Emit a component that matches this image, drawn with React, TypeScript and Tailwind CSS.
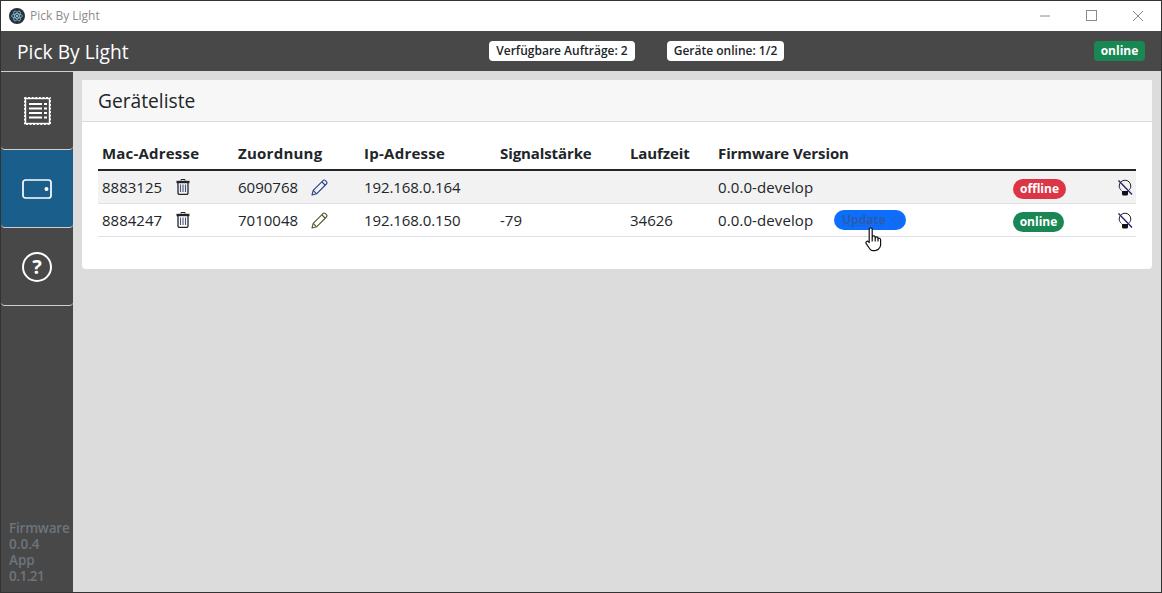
import React from "react";

const Trash = () => (
  <svg width="14" height="16" viewBox="0 0 14 16" fill="none" stroke="#212529">
    <path d="M0.5 3h13" strokeWidth="2.4" />
    <path d="M5 1.5v-1h4v1" strokeWidth="1" />
    <path d="M2 4v10a1.5 1.5 0 0 0 1.5 1.5h7A1.5 1.5 0 0 0 12 14V4" strokeWidth="1.3" />
    <path d="M4.5 5.5v7.5M7 5.5v7.5M9.5 5.5v7.5" strokeWidth="1.1" stroke="#4a5578" />
  </svg>
);

const Pencil = ({ color }: { color: string }) => (
  <svg width="17" height="17" viewBox="0 0 17 17" fill="none" stroke={color} strokeWidth="1.1" strokeLinejoin="round">
    <path d="M1 16l1.2-4.6L12 1.6a1.7 1.7 0 0 1 2.4 0l1 1a1.7 1.7 0 0 1 0 2.4L5.6 14.8z" />
    <path d="M2.2 11.4l3.4 3.4M11 3l3 3" />
  </svg>
);

const Bulb = () => (
  <svg width="16" height="17" viewBox="0 0 16 17" fill="none">
    <path d="M4.5 11.5C3 10.3 2.2 8.8 2.2 7a5.8 5.8 0 0 1 11.6 0c0 1.8-.8 3.3-2.3 4.5" stroke="#222" strokeWidth="1" />
    <path d="M5 12h6v3a1.5 1.5 0 0 1-1.5 1.5h-3A1.5 1.5 0 0 1 5 15z" fill="#111" />
    <path d="M1.5 1.5l13.5 14" stroke="#2a1f70" strokeWidth="1.4" />
  </svg>
);

const Receipt = () => (
  <svg width="27" height="28" viewBox="0 0 27 28" fill="none">
    <rect x="0.5" y="0.5" width="26" height="27" stroke="#fff" strokeWidth="1" strokeDasharray="2 1.6" />
    <rect x="1.5" y="1.5" width="24" height="25" stroke="#fff" strokeWidth="1.4" />
    <path d="M5 7h13M5 11.5h13M5 16h13M5 20.5h13" stroke="#fff" strokeWidth="2" />
    <path d="M20 7h3M20 11.5h3M20 16h3M20 20.5h3" stroke="#fff" strokeWidth="2" />
  </svg>
);

const Wallet = () => (
  <svg width="30" height="20" viewBox="0 0 30 20" fill="none">
    <rect x="1" y="1" width="28" height="18" rx="2.5" stroke="#fff" strokeWidth="1.7" />
    <circle cx="24.5" cy="10" r="2" fill="#fff" />
  </svg>
);

const Electron = () => (
  <svg width="16" height="16" viewBox="0 0 16 16" fill="none">
    <circle cx="8" cy="8" r="8" fill="#2b2e3b" />
    <g stroke="#9feaf9" strokeWidth="0.6">
      <ellipse cx="8" cy="8" rx="5.5" ry="2.2" />
      <ellipse cx="8" cy="8" rx="5.5" ry="2.2" transform="rotate(60 8 8)" />
      <ellipse cx="8" cy="8" rx="5.5" ry="2.2" transform="rotate(120 8 8)" />
    </g>
    <circle cx="8" cy="8" r="1" fill="#9feaf9" />
  </svg>
);

const Hand = () => (
  <svg width="18" height="25" viewBox="0 0 18 25" fill="#fff" stroke="#111" strokeWidth="1.2" strokeLinejoin="round">
    <path d="M4.2 2.2c0-1.9 3-1.9 3 0V10c.4-1.5 2.8-1.4 3 .2v.6c.5-1.3 2.6-1.1 2.8.4v.6c.6-1 2.6-.7 2.6.9v5.3c0 1.8-1 3.2-2.2 4.3-1 .9-2.2 1.3-3.6 1.3H8c-1.4 0-2.4-.6-3.1-1.6L1.2 16.6c-1-1.5.9-3.1 2.2-1.9l.8.8z" />
    <path d="M7.2 10v4.5M10.2 10.8v3.7M13 11.8v2.7" />
  </svg>
);

const Spinner = () => (
  <svg width="11" height="11" viewBox="0 0 11 11" fill="none" className="ml-[5px]">
    <circle cx="5.5" cy="5.5" r="4" stroke="#2f62b0" strokeWidth="1" strokeDasharray="4 1" />
  </svg>
);

function Badge({ bg, w, children }: { bg: string; w: string; children: React.ReactNode }) {
  return (
    <span className={`inline-flex h-5 items-center justify-center rounded-full text-xs font-bold leading-none text-white ${bg} ${w}`}>
      {children}
    </span>
  );
}

function Row({
  mac, ass, ip, sig, run, striped, update, status, pencil,
}: { mac: string; ass: string; ip: string; sig: string; run: string; striped?: boolean; update?: boolean; status: "on" | "off"; pencil: string }) {
  return (
    <div className={`flex h-[33px] items-center border-b border-[#dee2e6] pl-1 text-[#212529] ${striped ? "bg-[#f2f2f2]" : "bg-white"}`}>
      <div className="flex w-[136px] items-center">
        <span className="w-[74px]">{mac}</span>
        <Trash />
      </div>
      <div className="flex w-[126px] items-center">
        <span className="w-[73px]">{ass}</span>
        <Pencil color={pencil} />
      </div>
      <div className="w-[136px] tracking-[-0.08px]">{ip}</div>
      <div className="w-[130px]">{sig}</div>
      <div className="w-[88px]">{run}</div>
      <div className="flex w-[295px] items-center">
        <span className="w-[116px] tracking-[0.1px]">0.0.0-develop</span>
        {update && (
          <span className="relative flex h-5 w-[72px] items-center rounded-full bg-[#0d6efd] pl-2 text-xs font-bold text-[#285cae]">
            <span className="underline decoration-dotted">Update</span>
            <Spinner />
            <span className="absolute left-[31px] top-[17px] z-10"><Hand /></span>
          </span>
        )}
      </div>
      <div className="w-[104px]">
        {status === "off" ? <Badge bg="bg-[#dc3545]" w="w-[53px]">offline</Badge> : <Badge bg="bg-[#198754]" w="w-[51px]">online</Badge>}
      </div>
      <Bulb />
    </div>
  );
}

export default function App() {
  return (
    <div className="flex h-[593px] w-[1162px] flex-col overflow-hidden border border-[#333] bg-[#dcdcdc] font-['Open_Sans','Noto_Sans',sans-serif] text-[15px]">
      <div className="flex h-[30px] shrink-0 items-center bg-white pl-2 text-xs text-[#8c8c8c]">
        <Electron />
        <span className="ml-[5px]">Pick By Light</span>
        <div className="ml-auto flex items-center text-[#8a8a8a]">
          <svg width="12" height="12" viewBox="0 0 12 12" className="mr-[35px]"><path d="M1 6h10" stroke="#8a8a8a" /></svg>
          <svg width="12" height="12" viewBox="0 0 12 12" className="mr-[34px]"><rect x=".5" y=".5" width="10" height="10" fill="none" stroke="#8a8a8a" /></svg>
          <svg width="12" height="12" viewBox="0 0 12 12" className="mr-[17px]"><path d="M1 1l10 10M11 1L1 11" stroke="#8a8a8a" /></svg>
        </div>
      </div>

      <div className="relative flex h-10 shrink-0 items-center bg-[#484848] pl-4 pt-0.5 text-white">
        <span className="text-[19.2px] leading-none">Pick By Light</span>
        <div className="absolute left-[488px] top-[10px] flex gap-8">
          <span className="flex h-5 w-[146px] items-center justify-center rounded bg-white text-xs font-semibold text-[#212529]">Verfügbare Aufträge: 2</span>
          <span className="flex h-5 w-[117px] items-center justify-center rounded bg-white text-xs font-semibold text-[#212529]">Geräte online: 1/2</span>
        </div>
        <span className="absolute right-[16px] top-[10px] flex h-5 w-[51px] items-center justify-center rounded bg-[#198754] text-xs font-bold leading-none text-white">online</span>
      </div>

      <div className="flex min-h-0 flex-1">
        <div className="flex w-[72px] shrink-0 flex-col border-t border-[#cfcfcf] bg-[#484848] text-white">
          <div className="flex h-[78px] items-center justify-center rounded-b border-b border-[#cfcfcf]"><Receipt /></div>
          <div className="flex h-[78px] items-center justify-center rounded-b border-b border-[#cfcfcf] bg-[#1a5f8c]"><Wallet /></div>
          <div className="flex h-[78px] items-center justify-center rounded-b border-b border-[#cfcfcf]">
            <span className="flex h-[30px] w-[30px] items-center justify-center rounded-full border-2 border-white text-xl font-bold leading-none">?</span>
          </div>
          <div className="mt-auto flex flex-col pb-[8px] pl-2 text-[13.5px] font-semibold leading-4 text-[#6c757d]">
            <span className="tracking-[-0.2px]">Firmware</span>
            <span>0.0.4</span>
            <span>App</span>
            <span className="tracking-[-0.5px]">0.1.21</span>
          </div>
        </div>

        <div className="flex-1 pl-[9px] pr-[9px] pt-[9px]">
          <div className="rounded bg-white">
            <div className="flex h-[42px] items-center border-b border-[#dcdcdc] bg-[#f7f7f7] pl-4 pt-0.5 text-[19.2px] font-medium text-[#212529]">Geräteliste</div>
            <div className="px-4 pb-8 pt-4">
              <div className="flex h-[33px] items-center border-b-2 border-[#212529] pl-1 font-bold text-[#212529]">
                <div className="w-[136px] tracking-[0.2px]">Mac-Adresse</div>
                <div className="w-[126px] tracking-[0.25px]">Zuordnung</div>
                <div className="w-[136px] tracking-[0.25px]">Ip-Adresse</div>
                <div className="w-[130px] tracking-[-0.1px]">Signalstärke</div>
                <div className="w-[88px] tracking-[-0.1px]">Laufzeit</div>
                <div className="tracking-[-0.1px]">Firmware Version</div>
              </div>
              <Row mac="8883125" ass="6090768" ip="192.168.0.164" sig="" run="" striped status="off" pencil="#27408f" />
              <Row mac="8884247" ass="7010048" ip="192.168.0.150" sig="-79" run="34626" update status="on" pencil="#55552f" />
            </div>
          </div>
        </div>
      </div>
    </div>
  );
}
